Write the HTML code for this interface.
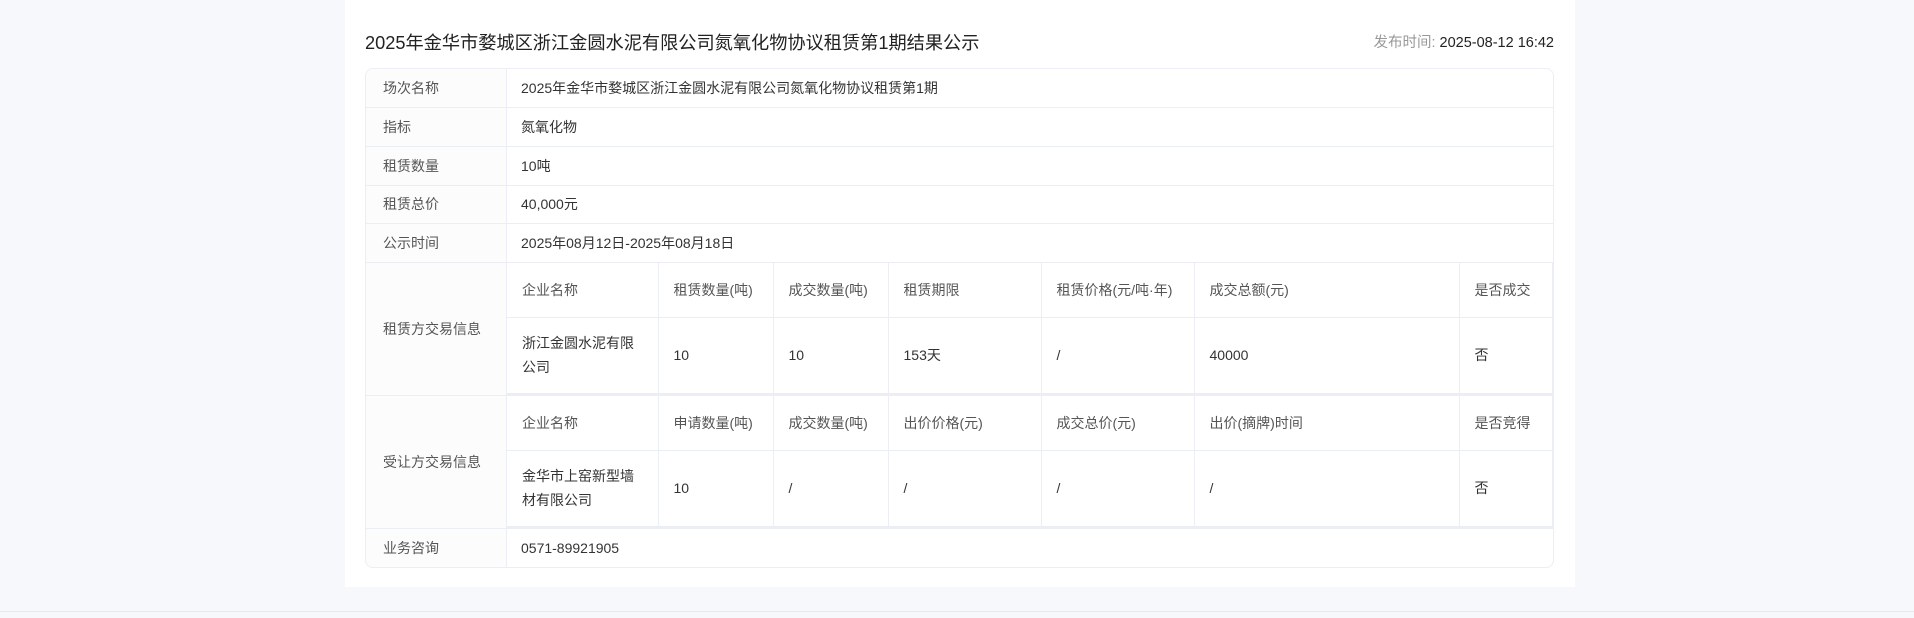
<!DOCTYPE html>
<html><head><meta charset="utf-8"><style>
*{margin:0;padding:0;box-sizing:border-box}
body{width:1914px;height:618px;background:#f7f8fb;font-family:"Liberation Sans","Noto Sans CJK SC",sans-serif;position:relative;overflow:hidden}
.panel{position:absolute;left:345px;top:0;width:1230px;height:587px;background:#fff}
.line{position:absolute;left:0;top:611px;width:1914px;height:1px;background:#e6e8ee}
.title{position:absolute;left:365px;top:30px;font-size:18.2px;color:#222;line-height:26px}
.meta{position:absolute;right:360px;top:34px;font-size:14.5px;color:#222;line-height:18px}
.meta span{color:#999}
.tbl{position:absolute;left:365px;top:68px;width:1189px;border:1px solid #ebeef5;border-radius:8px;overflow:hidden}
table{border-collapse:collapse;width:100%;font-size:14px;color:#333}
td{border-bottom:1px solid #ebeef5;padding:0 14px;vertical-align:middle}
td.l{width:142px;background:#fcfcfd;color:#555;padding-left:17px;border-right:1px solid #ebeef5}
tr.r td{height:38.7px}
tr:last-child td{border-bottom:none}
td.sub{padding:0}
.sub table td{border-right:1px solid #ebeef5;padding-left:15px}
.sub table tr:last-child td{border-bottom:2px solid #ebeef5}
.sub table td:last-child{border-right:1px solid #ebeef5}
.h td{height:54.5px;color:#555}
.d td{height:76.5px;line-height:24px}
</style></head><body>
<div class="panel"></div>
<div class="line"></div>
<div class="title">2025年金华市婺城区浙江金圆水泥有限公司氮氧化物协议租赁第1期结果公示</div>
<div class="meta"><span>发布时间:</span> 2025-08-12 16:42</div>
<div class="tbl"><table>
<tr class="r"><td class="l">场次名称</td><td>2025年金华市婺城区浙江金圆水泥有限公司氮氧化物协议租赁第1期</td></tr>
<tr class="r"><td class="l">指标</td><td>氮氧化物</td></tr>
<tr class="r"><td class="l">租赁数量</td><td>10吨</td></tr>
<tr class="r"><td class="l">租赁总价</td><td>40,000元</td></tr>
<tr class="r"><td class="l">公示时间</td><td>2025年08月12日-2025年08月18日</td></tr>
<tr><td class="l">租赁方交易信息</td><td class="sub"><table style="width:1046px">
<tr class="h"><td style="width:151px">企业名称</td><td style="width:115px">租赁数量(吨)</td><td style="width:115px">成交数量(吨)</td><td style="width:153px">租赁期限</td><td style="width:153px">租赁价格(元/吨·年)</td><td style="width:265px">成交总额(元)</td><td>是否成交</td></tr>
<tr class="d"><td>浙江金圆水泥有限<br>公司</td><td>10</td><td>10</td><td>153天</td><td>/</td><td>40000</td><td>否</td></tr>
</table></td></tr>
<tr><td class="l">受让方交易信息</td><td class="sub"><table style="width:1046px">
<tr class="h"><td style="width:151px">企业名称</td><td style="width:115px">申请数量(吨)</td><td style="width:115px">成交数量(吨)</td><td style="width:153px">出价价格(元)</td><td style="width:153px">成交总价(元)</td><td style="width:265px">出价(摘牌)时间</td><td>是否竞得</td></tr>
<tr class="d"><td>金华市上窑新型墙<br>材有限公司</td><td>10</td><td>/</td><td>/</td><td>/</td><td>/</td><td>否</td></tr>
</table></td></tr>
<tr class="r"><td class="l">业务咨询</td><td>0571-89921905</td></tr>
</table></div>
</body></html>
